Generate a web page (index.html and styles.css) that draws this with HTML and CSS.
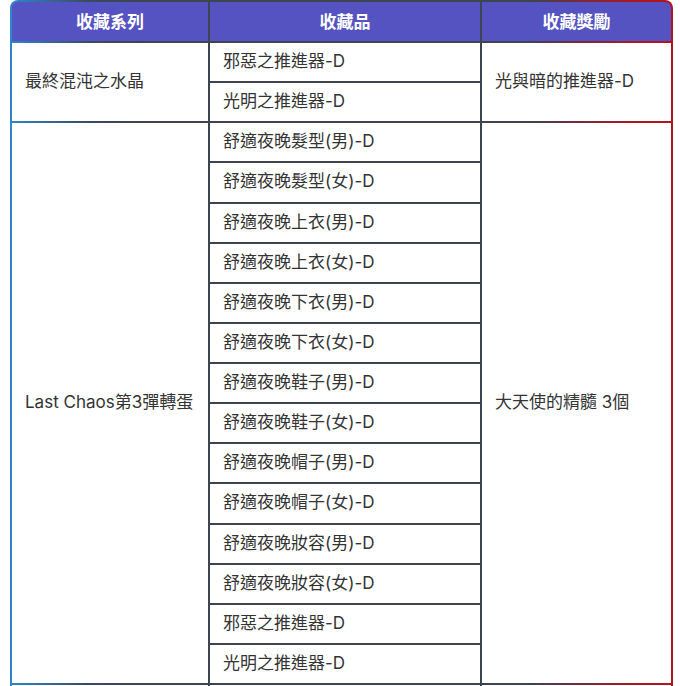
FILE: index.html
```html
<!DOCTYPE html>
<html lang="zh-Hant">
<head>
<meta charset="utf-8">
<title>收藏</title>
<link rel="stylesheet" href="styles.css">
</head>
<body>
<div class="wrap">
<table class="tbl">
  <colgroup>
    <col class="c1"><col class="c2"><col class="c3">
  </colgroup>
  <thead>
    <tr><th>收藏系列</th><th>收藏品</th><th>收藏獎勵</th></tr>
  </thead>
  <tbody>
    <tr><td rowspan="2">最終混沌之水晶</td><td>邪惡之推進器-D</td><td rowspan="2">光與暗的推進器-D</td></tr>
    <tr><td>光明之推進器-D</td></tr>
    <tr><td rowspan="14">Last Chaos第3彈轉蛋</td><td>舒適夜晚髮型(男)-D</td><td rowspan="14">大天使的精髓 3個</td></tr>
    <tr><td>舒適夜晚髮型(女)-D</td></tr>
    <tr><td>舒適夜晚上衣(男)-D</td></tr>
    <tr><td>舒適夜晚上衣(女)-D</td></tr>
    <tr><td>舒適夜晚下衣(男)-D</td></tr>
    <tr><td>舒適夜晚下衣(女)-D</td></tr>
    <tr><td>舒適夜晚鞋子(男)-D</td></tr>
    <tr><td>舒適夜晚鞋子(女)-D</td></tr>
    <tr><td>舒適夜晚帽子(男)-D</td></tr>
    <tr><td>舒適夜晚帽子(女)-D</td></tr>
    <tr><td>舒適夜晚妝容(男)-D</td></tr>
    <tr><td>舒適夜晚妝容(女)-D</td></tr>
    <tr><td>邪惡之推進器-D</td></tr>
    <tr><td>光明之推進器-D</td></tr>
    <tr><td>&nbsp;</td><td>&nbsp;</td><td>&nbsp;</td></tr>
  </tbody>
</table>
</div>
</body>
</html>
```
FILE: styles.css
```css
html, body {
  margin: 0;
  padding: 0;
  overflow: hidden;
  background: #ffffff;
}
.wrap {
  padding-left: 10px;
}
.tbl {
  width: 663px;
  border-collapse: separate;
  border-spacing: 2px;
  border-radius: 8px 8px 0 0;
  background: linear-gradient(90deg, #2e86cc 0%, #3b4a5e 12%, #3d4452 20%, #3d4452 78%, #7a2a3a 86%, #b01420 95%, #b01420 100%);
  table-layout: fixed;
  font-family: Inter, "Noto Sans CJK TC", sans-serif;
  font-size: 17px;
  line-height: 20px;
  color: #333333;
}
.c1 { width: 196px; }
.c2 { width: 270px; }
.c3 { width: 189px; }
.tbl th {
  height: 39px;
  padding: 0;
  background: #5553c2;
  color: #ffffff;
  font-weight: 700;
  font-size: 17px;
  text-align: center;
  vertical-align: middle;
}
.tbl th:first-child { border-top-left-radius: 6px; }
.tbl th:last-child { border-top-right-radius: 6px; }
.tbl td {
  height: 36.125px;
  padding: 0 0 2px 13px;
  background: #ffffff;
  vertical-align: middle;
  text-align: left;
  white-space: nowrap;
}
```
